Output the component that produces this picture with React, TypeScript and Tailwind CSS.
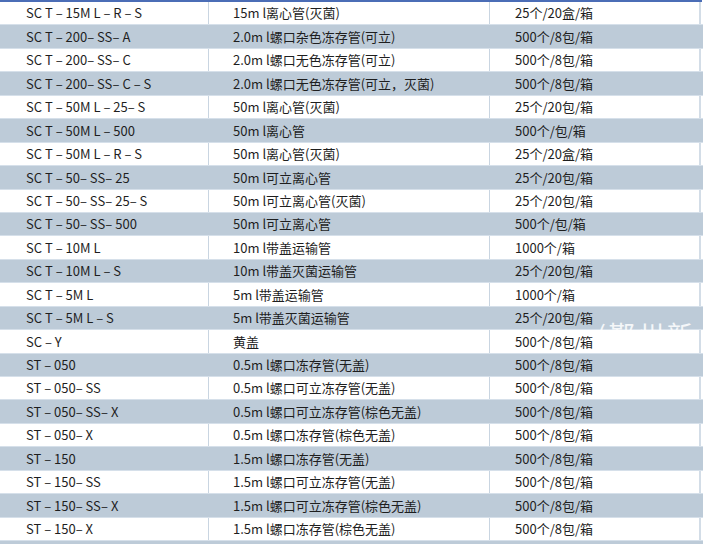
const rows: [string, string, string][] = [
  ['SC T – 15M L – R – S', '15m l离心管(灭菌)', '25个/20盒/箱'],
  ['SC T – 200– SS– A', '2.0m l螺口杂色冻存管(可立)', '500个/8包/箱'],
  ['SC T – 200– SS– C', '2.0m l螺口无色冻存管(可立)', '500个/8包/箱'],
  ['SC T – 200– SS– C – S', '2.0m l螺口无色冻存管(可立，灭菌)', '500个/8包/箱'],
  ['SC T – 50M L – 25– S', '50m l离心管(灭菌)', '25个/20包/箱'],
  ['SC T – 50M L – 500', '50m l离心管', '500个/包/箱'],
  ['SC T – 50M L – R – S', '50m l离心管(灭菌)', '25个/20盒/箱'],
  ['SC T – 50– SS– 25', '50m l可立离心管', '25个/20包/箱'],
  ['SC T – 50– SS– 25– S', '50m l可立离心管(灭菌)', '25个/20包/箱'],
  ['SC T – 50– SS– 500', '50m l可立离心管', '500个/包/箱'],
  ['SC T – 10M L', '10m l带盖运输管', '1000个/箱'],
  ['SC T – 10M L – S', '10m l带盖灭菌运输管', '25个/20包/箱'],
  ['SC T – 5M L', '5m l带盖运输管', '1000个/箱'],
  ['SC T – 5M L – S', '5m l带盖灭菌运输管', '25个/20包/箱'],
  ['SC – Y', '黄盖', '500个/8包/箱'],
  ['ST – 050', '0.5m l螺口冻存管(无盖)', '500个/8包/箱'],
  ['ST – 050– SS', '0.5m l螺口可立冻存管(无盖)', '500个/8包/箱'],
  ['ST – 050– SS– X', '0.5m l螺口可立冻存管(棕色无盖)', '500个/8包/箱'],
  ['ST – 050– X', '0.5m l螺口冻存管(棕色无盖)', '500个/8包/箱'],
  ['ST – 150', '1.5m l螺口冻存管(无盖)', '500个/8包/箱'],
  ['ST – 150– SS', '1.5m l螺口可立冻存管(无盖)', '500个/8包/箱'],
  ['ST – 150– SS– X', '1.5m l螺口可立冻存管(棕色无盖)', '500个/8包/箱'],
  ['ST – 150– X', '1.5m l螺口冻存管(棕色无盖)', '500个/8包/箱'],
];

function Row({ cells, shaded }: { cells: [string, string, string]; shaded: boolean }) {
  const line = shaded ? '' : 'border-r border-[#c9d5e1]';
  return (
    <div
      className={`flex h-[23.45px] items-center border-b border-[#d6e0ea] ${
        shaded ? 'bg-[#bdcbd8]' : 'bg-white'
      }`}
    >
      <div className={`flex h-full w-[209px] items-center pl-[26px] whitespace-pre ${line}`}>{cells[0]}</div>
      <div className={`flex h-full w-[281px] items-center pl-[24px] whitespace-nowrap ${line}`}>{cells[1]}</div>
      <div className={`flex h-full w-[211px] items-center pl-[25px] whitespace-nowrap ${shaded ? '' : 'border-r-2 border-[#d3dde7]'}`}>
        {cells[2]}
      </div>
    </div>
  );
}

export default function App() {
  return (
    <div
      className="relative h-[544px] w-[703px] overflow-hidden bg-white text-[13px] text-[#1e1e1e]"
      style={{ fontFamily: '"Noto Sans CJK SC", "Noto Sans", sans-serif' }}
    >
      <div className="h-[2px] w-[702px] bg-[#4b6db6]" />
      {rows.map((r, i) => (
        <Row key={i} cells={r} shaded={i % 2 === 1} />
      ))}
      <div className="h-[4px] bg-[#bdcbd8]" />

      {/* faded watermark */}
      <div className="pointer-events-none absolute left-[597px] top-[321px] text-[26px] leading-none tracking-[3px] text-white/85">
        (鄞州新
      </div>
    </div>
  );
}
